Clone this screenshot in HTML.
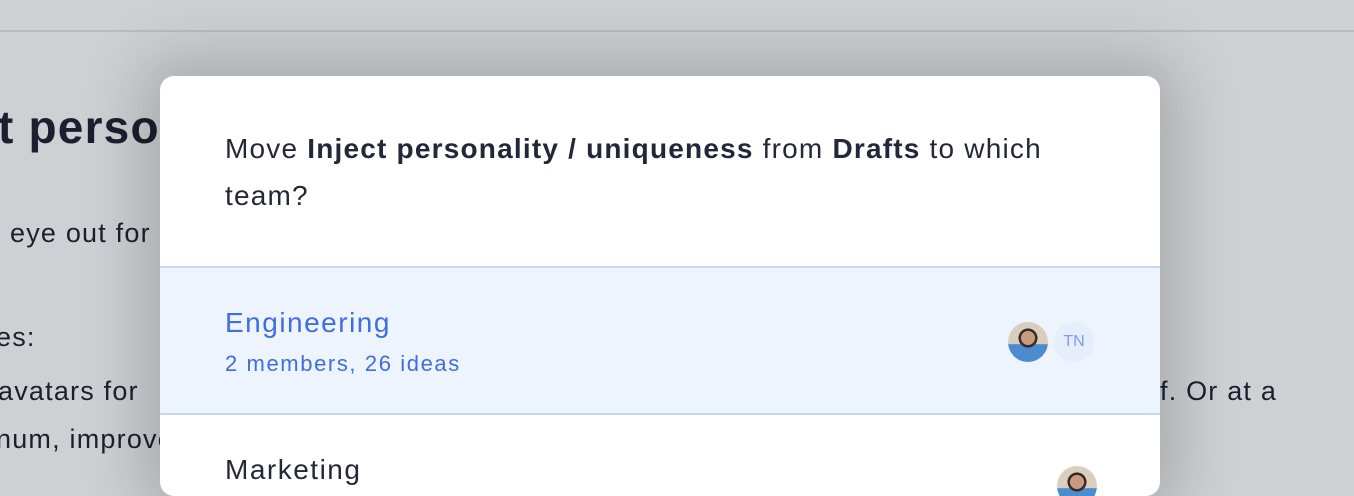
<!DOCTYPE html>
<html><head><style>
html,body{margin:0;padding:0;}
body{width:1354px;height:480px;overflow:hidden;position:relative;background:#cfd0d4;font-family:"Liberation Sans",sans-serif;color:#1e2433;}
.line{position:absolute;left:0;top:30px;width:1354px;height:2px;background:#b9bcc4;}
.bg{position:absolute;white-space:nowrap;color:#1b2030;letter-spacing:1.2px;}
.modal{position:absolute;left:160px;top:76px;width:1000px;height:420px;background:#fff;border-radius:14px;box-shadow:0 0 60px 20px rgba(0,0,0,0.18);overflow:hidden;}
.q{position:absolute;left:65px;top:49px;width:870px;font-size:28px;line-height:47px;color:#222839;letter-spacing:1.2px;}
.row1{position:absolute;left:0;top:190px;width:1000px;height:145px;background:#eef4fd;border-top:2px solid #c3d8f3;border-bottom:2px solid #c3d8f3;}
.t1{position:absolute;left:65px;top:39px;font-size:28px;color:#3f6ee0;letter-spacing:1.5px;}
.s1{position:absolute;left:65px;top:83px;font-size:22px;color:#3f6ee0;letter-spacing:1.6px;}
.av{position:absolute;width:40px;height:40px;border-radius:50%;background:radial-gradient(circle at 50% 40%,#c99a7e 0 22%,#3a2a22 23% 30%,transparent 31%),linear-gradient(#d8cfbf 0 55%,#4b8cd0 56%);}
.tn{position:absolute;left:894px;top:54px;width:40px;height:40px;border-radius:50%;background:#e6eefb;color:#7f9ce8;font-size:16px;line-height:40px;text-align:center;}
.t2{position:absolute;left:65px;top:378px;font-size:28px;color:#222839;letter-spacing:1.5px;}
</style></head><body>
<div class="line"></div>
<div class="bg" style="left:-2px;top:100px;font-size:46px;font-weight:bold;">t personality</div>
<div class="bg" style="left:10px;top:218px;font-size:27px;">eye out for</div>
<div class="bg" style="left:-4px;top:322px;font-size:27px;">es:</div>
<div class="bg" style="left:-2px;top:376px;font-size:27px;">avatars for</div>
<div class="bg" style="left:1160px;top:376px;font-size:27px;">f. Or at a</div>
<div class="bg" style="left:-4px;top:424px;font-size:27px;">num, improve</div>
<div class="modal">
<div class="q">Move <b>Inject personality / uniqueness</b> from <b>Drafts</b> to which team?</div>
<div class="row1">
<div class="t1">Engineering</div>
<div class="s1">2 members, 26 ideas</div>
<div class="av" style="left:848px;top:54px;"></div>
<div class="tn">TN</div>
</div>
<div class="t2">Marketing</div>
<div class="av" style="left:897px;top:390px;"></div>
</div>
</body></html>
